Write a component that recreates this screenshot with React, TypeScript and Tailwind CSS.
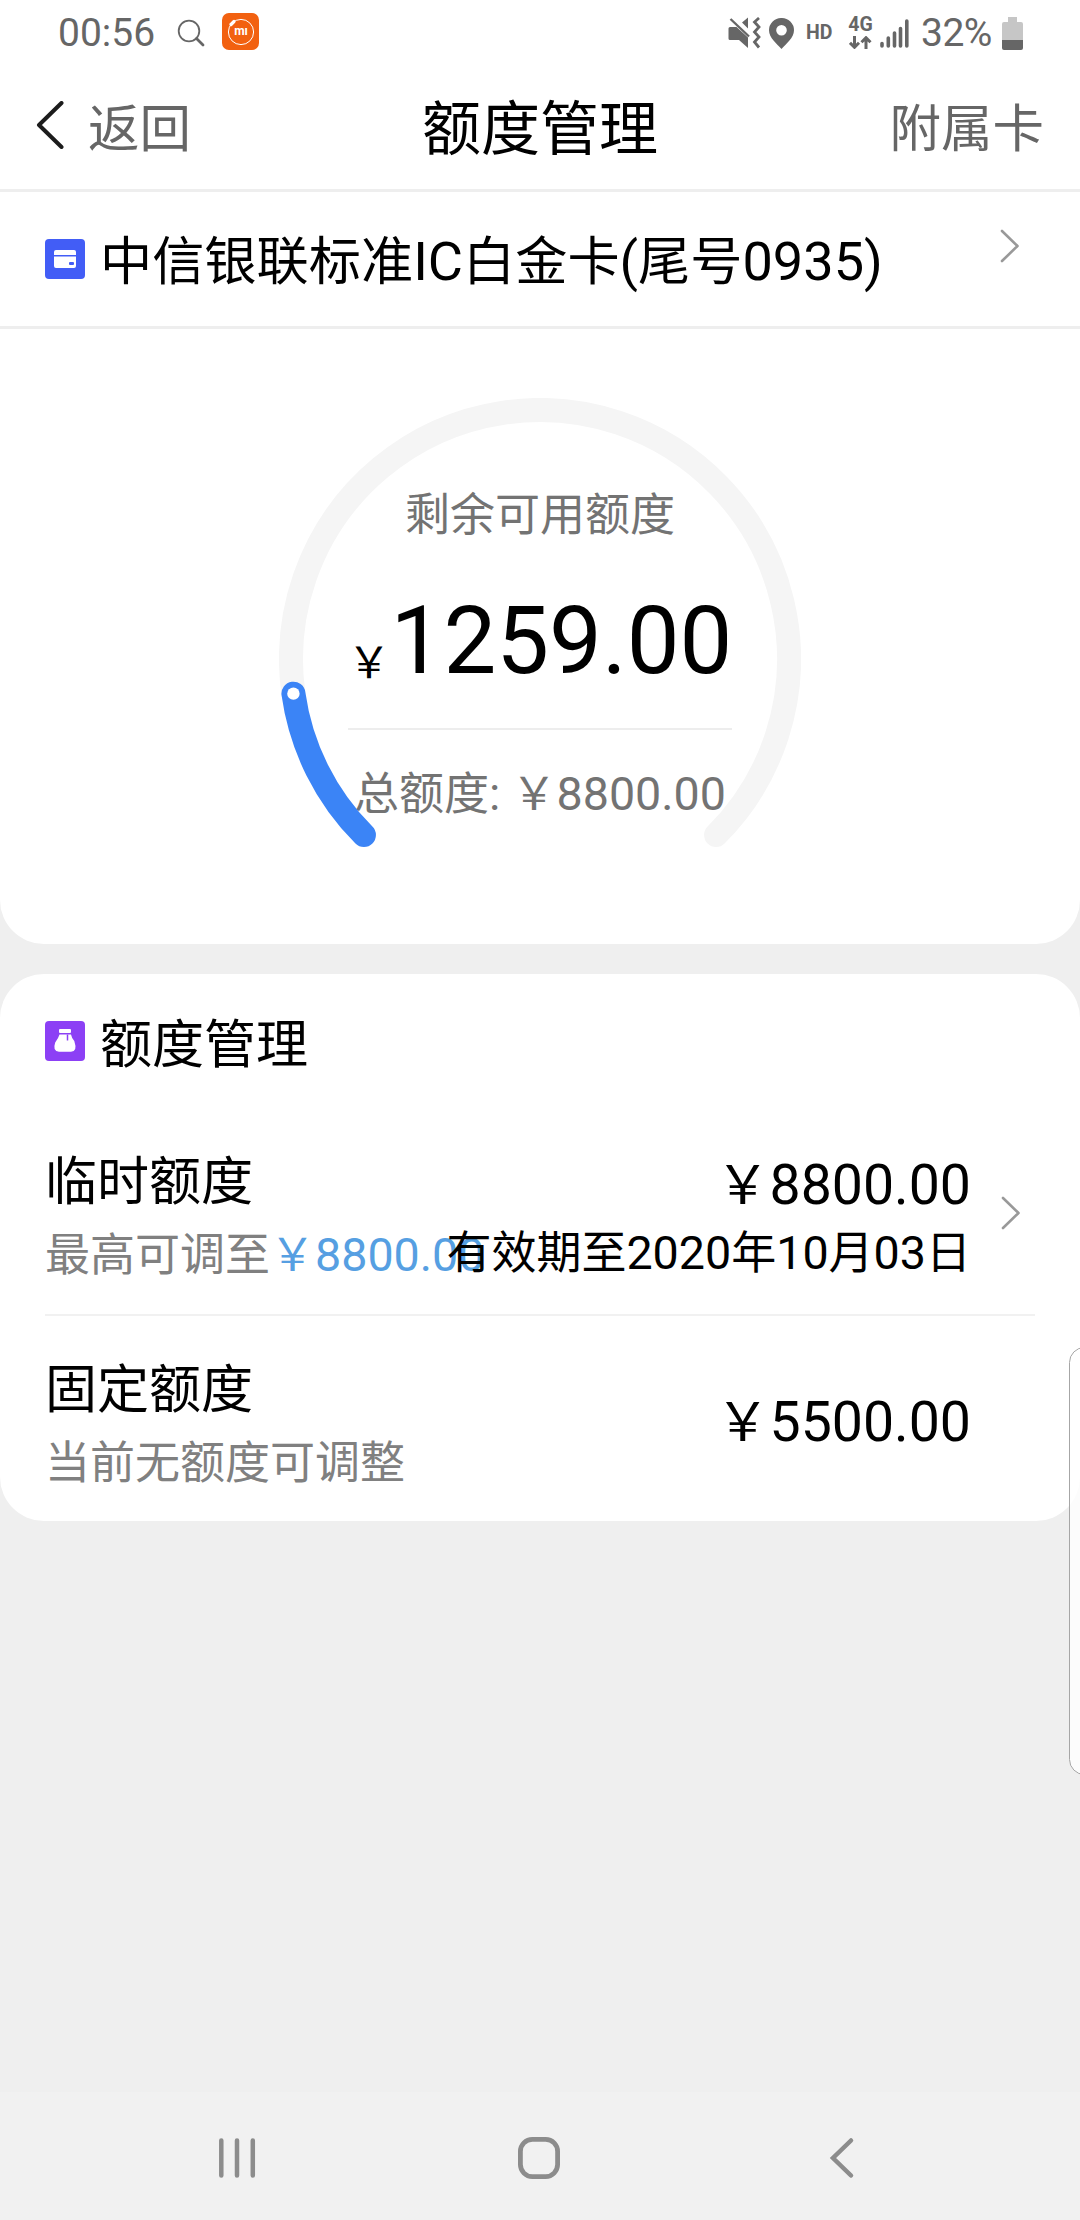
import type { ReactNode } from 'react';

const RING_CENTER = 261;
const RING_RADIUS = 249;

// angle in degrees, clockwise from 12 o'clock
function ringPoint(angle: number) {
  const rad = (angle * Math.PI) / 180;
  return {
    x: RING_CENTER + RING_RADIUS * Math.sin(rad),
    y: RING_CENTER - RING_RADIUS * Math.cos(rad),
  };
}

function arcPath(from: number, to: number) {
  const a = ringPoint(from);
  const b = ringPoint(to);
  const large = to - from > 180 ? 1 : 0;
  return `M${a.x} ${a.y}A${RING_RADIUS} ${RING_RADIUS} 0 ${large} 1 ${b.x} ${b.y}`;
}

export default function App() {
  return (
    <div className="relative flex h-[2220px] w-[1080px] flex-col overflow-hidden bg-[#efefef] font-['Roboto','Noto_Sans_CJK_SC',sans-serif] text-black">
      <StatusBar />
      <Header />
      <main className="flex flex-1 flex-col gap-[30px]">
        <section className="h-[752px] rounded-b-[44px] bg-white">
          <CardSelector />
          <LimitGauge />
        </section>
        <LimitList />
      </main>
      <NavBar />
      {/* Edge panel handle */}
      <div className="absolute top-[1347px] -right-[20px] h-[428px] w-[31px] rounded-[20px] border border-[#a6a6a6] bg-white/80" />
    </div>
  );
}

// Latin letters and digits are set slightly larger than the Chinese around them
function Mixed({ text }: { text: string }) {
  return (
    <>
      {text.split(/([\x21-\x7e]+)/).map((part, i) =>
        i % 2 ? (
          <span key={i} className="text-[1.036em] leading-[0]">
            {part}
          </span>
        ) : (
          part
        ),
      )}
    </>
  );
}

function StatusBar() {
  return (
    <div className="flex h-[60px] items-center bg-white pt-[6px] pr-[57px] pl-[58px] text-[39px] leading-[54px] text-[#666]">
      <span className="w-[119px] shrink-0">00:56</span>
      <svg className="h-[28px] w-[28px]" viewBox="0 0 28 28" fill="none" stroke="currentColor">
        <circle cx="12" cy="12" r="10.3" strokeWidth="1.8" />
        <path d="M19.5 19.5l6.5 6.5" strokeWidth="2.8" strokeLinecap="round" />
      </svg>
      <div className="relative mb-[3px] ml-[17px] flex h-[37px] w-[37px] items-center justify-center rounded-[7px] bg-[#f26110]">
        <svg className="absolute inset-0" viewBox="0 0 37 37" fill="none" stroke="white">
          <circle cx="19" cy="19" r="12.6" strokeWidth="1" />
          <path d="M9 11.5l3-3" strokeWidth="3.2" strokeLinecap="round" />
        </svg>
        <span className="relative mb-[1px] ml-[1px] text-[12px] leading-[12px] font-bold text-white">mı</span>
      </div>

      <div className="ml-auto flex items-center">
        <svg className="h-[32px] w-[33px]" viewBox="0 0 33 32" fill="currentColor">
          <path d="M2 10h6.5L20 20.5V31l-9-8H2q-1.5 0-1.5-1.5v-10Q.5 10 2 10zM14 5.5L20 .5v11z" />
          <path d="M2.5 2L21 19.5" stroke="currentColor" strokeWidth="2.4" />
          <path d="M31 1l-4.5 4L31 10l-4.5 5 4.5 5-4.5 5 4.5 5.5" fill="none" stroke="currentColor" strokeWidth="2.8" />
        </svg>
        <svg className="ml-[8px] h-[31px] w-[25px]" viewBox="0 0 25 31" fill="currentColor" fillRule="evenodd">
          <path d="M12.5 0A12.3 12.3 0 0 1 25 12.3C25 20 17 26 12.5 31 8 26 0 20 0 12.3A12.3 12.3 0 0 1 12.5 0zm0 7a5.3 5.3 0 1 0 0 10.6 5.3 5.3 0 0 0 0-10.6z" />
        </svg>
        <span className="ml-[12px] w-[42px] text-[19.5px] font-bold">HD</span>
        <div className="flex w-[25px] flex-col items-center gap-[4px]">
          <span className="text-[19.5px] leading-[15px] font-bold">4G</span>
          <svg className="h-[13px] w-[23px]" viewBox="0 0 23 13" fill="none" stroke="currentColor" strokeWidth="3">
            <path d="M5.5 0v11M1 6.8l4.5 4.5L10 6.8M17 13V2M12.5 6.2L17 1.7l4.5 4.5" />
          </svg>
        </div>
        <svg className="ml-[7px] h-[29px] w-[29px]" viewBox="0 0 29 29" stroke="currentColor" strokeWidth="3.6" strokeLinecap="round">
          <path d="M2 24.5v2.5M8.3 19v8M14.5 14v13M20.5 9.5v17.5M26.8 2v25" />
        </svg>
        <span className="ml-[12px] w-[81px] tracking-[-0.5px]">32%</span>
        <svg className="h-[33px] w-[21px]" viewBox="0 0 21 33">
          <path d="M6 0h9v5h4q2 0 2 2v17H0V7q0-2 2-2h4z" fill="#c6c6c6" />
          <path d="M0 23h21v8q0 2-2 2H2q-2 0-2-2z" fill="#666" />
        </svg>
      </div>
    </div>
  );
}

function Header() {
  return (
    <header className="flex h-[132px] items-center justify-between border-b-[3px] border-[#eee] bg-white pr-[36px] pl-[36px] text-[51.5px] leading-none text-[#666]">
      <button className="flex w-[240px] items-center gap-[24px]">
        <svg className="h-[48px] w-[28px]" viewBox="0 0 28 48" fill="none" stroke="#1c1c1c" strokeWidth="4" strokeLinecap="round" strokeLinejoin="round">
          <path d="M25.5 2L3 24l22.5 22" />
        </svg>
        <span className="pt-[11px]">返回</span>
      </button>
      <h1 className="pt-[10px] text-[59px] text-black">额度管理</h1>
      <button className="w-[240px] pt-[11px] text-right">附属卡</button>
    </header>
  );
}

function Chevron() {
  return (
    <svg className="h-[34px] w-[20px] shrink-0" viewBox="0 0 20 34" fill="none" stroke="#999" strokeWidth="2.6" strokeLinecap="round" strokeLinejoin="round">
      <path d="M2 2l15.5 15L2 32" />
    </svg>
  );
}

function CardSelector() {
  return (
    <div className="flex h-[137px] items-center border-b-[3px] border-[#eee] pr-[60px] pl-[45px]">
      <svg className="h-[40px] w-[40px]" viewBox="0 0 40 40">
        <rect width="40" height="40" rx="4" fill="#425df6" />
        <path d="M9 16v-3q0-2 2-2h18q2 0 2 2v3zM9 17.5h22V27q0 2-2 2H11q-2 0-2-2z" fill="white" />
        <rect x="24" y="23" width="5" height="3" rx="1" fill="#425df6" />
      </svg>
      <span className="ml-[15px] pt-[9px] text-[52.2px] leading-none">
        <Mixed text="中信银联标准IC白金卡(尾号0935)" />
      </span>
      <div className="mb-[26px] ml-auto flex">
        <Chevron />
      </div>
    </div>
  );
}

function LimitGauge() {
  const knob = ringPoint(262);

  return (
    <div className="relative mx-auto mt-[69px] flex h-[460px] w-[522px] flex-col items-center">
      <span className="mt-[95px] text-[45px] leading-[46px] text-[#737373]">剩余可用额度</span>
      <div className="mt-[55px] flex h-[103px] items-baseline leading-none">
        <span className="relative top-[5px] text-[43px]">￥</span>
        <span className="text-[94px]">1259.00</span>
      </div>
      <div className="mt-[31px] h-[2px] w-[384px] bg-[#ededed]" />
      <span className="mt-[42px] text-[45px] leading-[46px] whitespace-pre text-[#737373]">
        <Mixed text="总额度: ￥8800.00" />
      </span>

      <svg className="absolute top-0 left-0 h-[522px] w-[522px]" viewBox="0 0 522 522" fill="none" strokeWidth="24" strokeLinecap="round">
        <path d={arcPath(262, 495)} stroke="#f5f5f5" />
        <path d={arcPath(225, 262)} stroke="#3b84f6" />
        <circle cx={knob.x} cy={knob.y} r="6.2" fill="white" />
      </svg>
    </div>
  );
}

function LimitList() {
  return (
    <section className="h-[547px] rounded-[44px] bg-white px-[45px]">
      <div className="flex h-[134px] items-center">
        <svg className="h-[40px] w-[40px]" viewBox="0 0 40 40">
          <rect width="40" height="40" rx="4" fill="#8c40f5" />
          <rect x="14" y="8" width="12" height="4" rx="1" fill="white" />
          <path d="M14.5 13.5H26q.5 3 3.3 6.5 3.5 10.5-3.3 10.8H14q-6.8-.3-3.8-9.3Q13.5 17 14.5 13.5z" fill="white" />
          <path d="M22.5 13.5v6" stroke="#8c40f5" strokeWidth="1.5" />
        </svg>
        <h2 className="ml-[15px] pt-[10px] text-[52px] leading-none">额度管理</h2>
      </div>

      <LimitRow
        name="临时额度"
        hint={
          <>
            最高可调至
            <span className="text-[#569fe2]">
              <Mixed text="￥8800.00" />
            </span>
          </>
        }
        amount="￥8800.00"
        expiry="有效期至2020年10月03日"
        clickable
      />
      <div className="h-[2px] bg-[#f1f1f1]" />
      <LimitRow name="固定额度" hint="当前无额度可调整" amount="￥5500.00" />
    </section>
  );
}

function LimitRow({
  name,
  hint,
  amount,
  expiry,
  clickable,
}: {
  name: string;
  hint: ReactNode;
  amount: string;
  expiry?: string;
  clickable?: boolean;
}) {
  return (
    <div className="flex h-[206px] items-center">
      {/* zero width: a long hint may run under the expiry date */}
      <div className="flex w-0 flex-col gap-[21px] pt-[16px] whitespace-nowrap">
        <span className="text-[52px] leading-[52px]">{name}</span>
        <span className="text-[45px] leading-[52px] text-[#808080]">{hint}</span>
      </div>
      <div className={`relative ml-auto flex flex-col items-end gap-[12px] ${expiry ? 'pt-[17px]' : 'pt-[8px]'}`}>
        <span className="text-[53.5px] leading-[56px]">
          <Mixed text={amount} />
        </span>
        {expiry && (
          <span className="text-[45px] leading-[56px]">
            <Mixed text={expiry} />
          </span>
        )}
      </div>
      <div className="flex w-[64px] justify-end pt-[4px] pr-[14px]">{clickable && <Chevron />}</div>
    </div>
  );
}

function NavBar() {
  return (
    <nav className="flex h-[128px] items-center bg-[#f1f1f1] pt-[4px] pl-[217px] text-[#8c8c8c]">
      <svg className="h-[44px] w-[40px]" viewBox="0 0 40 44" stroke="currentColor" strokeWidth="4.5" strokeLinecap="round">
        <path d="M4.3 4.5v35M20 4.5v35M35.8 4.5v35" />
      </svg>
      <svg className="ml-[260px] h-[44px] w-[44px]" viewBox="0 0 44 44" fill="none" stroke="currentColor" strokeWidth="4.8">
        <rect x="3.4" y="3.4" width="37.2" height="37.2" rx="12" />
      </svg>
      <svg className="ml-[267px] h-[44px] w-[28px]" viewBox="0 0 28 44" fill="none" stroke="currentColor" strokeWidth="4.5" strokeLinecap="round">
        <path d="M23 4.5L5 22l18 17.5" />
      </svg>
    </nav>
  );
}
